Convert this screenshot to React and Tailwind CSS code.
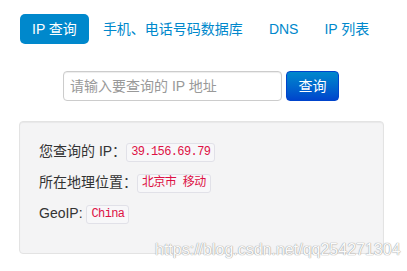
export default function App() {
  const font = { fontFamily: '"Liberation Sans", "Noto Sans CJK SC", sans-serif' };
  const mono = { fontFamily: '"Liberation Mono", "Noto Sans CJK SC", monospace' };
  const codeCls = 'inline-block px-[4px] text-[12px] tracking-[-0.6px] leading-[17px] text-[#dd1144] bg-[#f7f7f9] border border-[#e1e1e8] rounded-[3px] align-middle';

  return (
    <div className="relative w-[407px] h-[271px] bg-white text-[#333] text-[14px] overflow-hidden" style={font}>
      <div className="pl-[20px] pr-[19px] pt-[14px]">
        {/* Nav pills */}
        <ul className="flex items-center">
          <li className="mr-[2px]">
            <a className="block px-[12px] h-[30px] leading-[30px] rounded-[5px] bg-[#0088cc] text-white">IP 查询</a>
          </li>
          <li className="mr-[2px]">
            <a className="block px-[12px] h-[30px] leading-[30px] text-[#0088cc]">手机、电话号码数据库</a>
          </li>
          <li className="mr-[2px]">
            <a className="block px-[12px] h-[30px] leading-[30px] text-[#0088cc]">DNS</a>
          </li>
          <li>
            <a className="block px-[12px] h-[30px] leading-[30px] text-[#0088cc]">IP 列表</a>
          </li>
        </ul>

        {/* Search form */}
        <div className="flex justify-center items-center gap-[4px] mt-[27px] pr-[6px]">
          <input
            type="text"
            placeholder="请输入要查询的 IP 地址"
            className="w-[219px] h-[30px] px-[6px] text-[14px] border border-[#cccccc] rounded-[4px] placeholder:text-[#999999] outline-none shadow-[inset_0_1px_1px_rgba(0,0,0,0.075)]"
            style={font}
          />
          <button className="w-[53px] h-[30px] text-white text-[14px] rounded-[4px] border border-[#0044cc] bg-gradient-to-b from-[#0088cc] to-[#0044cc]">
            查询
          </button>
        </div>

        {/* Result well */}
        <div className="mt-[20px] w-[365px] -ml-[1px] bg-[#f4f4f5] border border-[#e3e3e3] rounded-[4px] px-[19px] pt-[19px] pb-[19px] shadow-[inset_0_1px_1px_rgba(0,0,0,0.05)]">
          <p className="leading-[21px] mb-[10px]">
            您查询的 IP：<code className={codeCls} style={mono}>39.156.69.79</code>
          </p>
          <p className="leading-[21px] mb-[10px]">
            所在地理位置：<code className={codeCls} style={mono}>北京市 移动</code>
          </p>
          <p className="leading-[21px] mb-[10px]">
            GeoIP: <code className={codeCls} style={mono}>China</code>
          </p>
        </div>
      </div>

      {/* Watermark */}
      <div className="absolute left-[155px] top-[241px] leading-[18px] text-[16px] text-[#fbfbfb] [text-shadow:0_0_1px_#9a9a9a,0_0_1px_#9a9a9a]" style={font}>
        https://blog.csdn.net/qq254271304
      </div>
    </div>
  );
}
